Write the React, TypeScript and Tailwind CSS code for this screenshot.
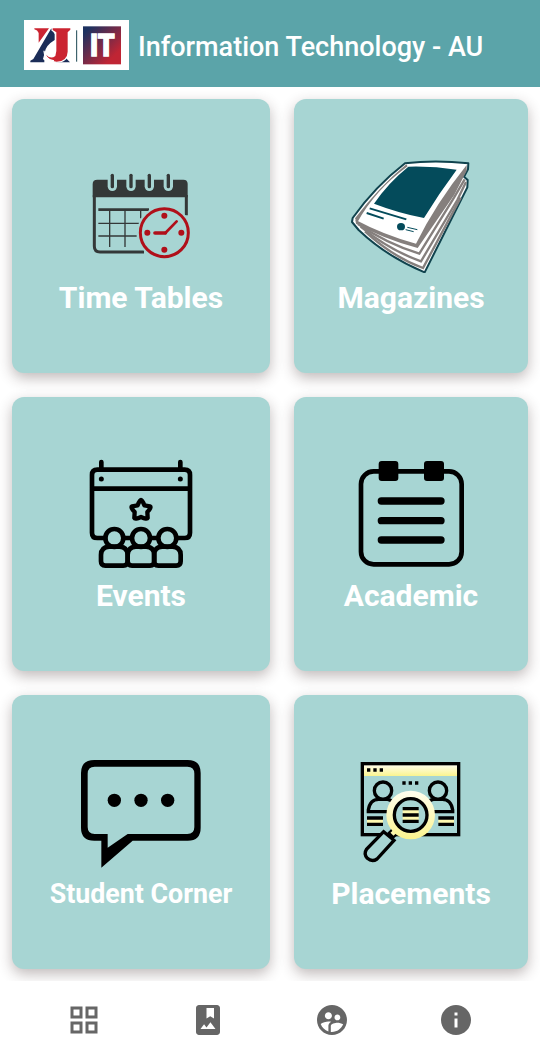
import React from "react";
import { MdInfo, MdOutlineGridView, MdSupervisedUserCircle } from "react-icons/md";

interface Tile {
  label: string;
  labelClass: string;
  icon: React.ReactNode;
}

interface TileIconProps {
  viewBox: string;
  children: React.ReactNode;
}

const TileIcon: React.FC<TileIconProps> = ({ viewBox, children }) => (
  <svg viewBox={viewBox} fill="none" className="h-[124px] w-[140px] shrink-0">
    {children}
  </svg>
);

const TimeTableIcon = () => (
  <TileIcon viewBox="-27 -48 420 372">
    <path d="M43 90V244Q43 261 60 261H192M319 90V151" stroke="#343838" strokeWidth="9" />
    <path d="M38 97V57Q38 44 52 44H310Q323 44 323 57V97Z" fill="#343838" />
    {[97, 153, 208, 265].map((x) => (
      <g key={x} strokeLinecap="round">
        <path d={`M${x} 41V64`} stroke="#a7d5d3" strokeWidth="28" />
        <path d={`M${x} 31V65`} stroke="#343838" strokeWidth="10" />
      </g>
    ))}
    <path d="M55 134H207" stroke="#343838" strokeWidth="8" />
    <path d="M55 175H177M55 213H170M89 134V246M135 134V246M182 134V160" stroke="#343838" strokeWidth="4" />
    <circle cx="253" cy="203" r="82" fill="#a7d5d3" />
    <circle cx="253" cy="203" r="72" stroke="#b0101a" strokeWidth="9" />
    <g fill="#b0101a">
      <circle cx="253" cy="152" r="9" />
      <circle cx="253" cy="254" r="9" />
      <circle cx="202" cy="203" r="9" />
      <circle cx="304" cy="203" r="9" />
    </g>
    <path d="M225 204H256" stroke="#b0101a" strokeWidth="11" strokeLinecap="round" />
    <path d="M256 204L290 169" stroke="#b0101a" strokeWidth="8" strokeLinecap="round" />
  </TileIcon>
);

const MagazineIcon = () => (
  <TileIcon viewBox="3 -3 420 372">
    <path
      d="M195 40Q285 29 385 40L384 58L372 80L383 90L382 112L254 367Q140 320 56 240L36 216L38 204Q105 110 195 40Z"
      fill="#fff"
      stroke="#10434e"
      strokeWidth="6"
      strokeLinejoin="round"
    />
    <path d="M199 43Q120 108 45 205L51 219Q105 120 203 49Z" fill="#857f7d" />
    <path d="M380 45Q288 160 228 281Q130 254 46 209L48 221Q130 266 233 294L343 134L380 62Z" fill="#857f7d" />
    <g stroke="#857f7d" strokeWidth="7">
      <path d="M54 222Q140 281 238 311L342 143L374 88" />
      <path d="M62 230Q145 299 243 334L352 150L378 96" />
      <path d="M75 244Q160 322 249 354L362 143" />
    </g>
    <path d="M205 50Q280 48 350 59Q297 130 252 204Q175 189 102 161Q145 98 205 50Z" fill="#044b5b" />
    <path d="M89 175L199 208M80 189L131 206" stroke="#044b5b" strokeWidth="6" />
    <path d="M202 232L232 239M197 239L221 245" stroke="#044b5b" strokeWidth="3" />
    <ellipse cx="183" cy="230" rx="12" ry="11" fill="#044b5b" />
  </TileIcon>
);

const EventsIcon = () => (
  <TileIcon viewBox="-27 -9 420 372">
    <g stroke="#000" strokeWidth="14" strokeLinecap="round" strokeLinejoin="round">
      <path d="M76 264H52Q36 264 36 248V75Q36 59 52 59H314Q330 59 330 75V248Q330 264 314 264H290M133 264H154M212 264H232M36 116H330M64 36V58M301 36V58" />
      <path
        d="M183 150Q187 150 193 166L210 169Q215 172 202 186L203 204Q201 209 183 201Q165 209 163 204L164 186Q151 172 156 169L173 166Q179 150 183 150Z"
        strokeWidth="13"
      />
      {[103, 183, 262].map((x) => (
        <g key={x} strokeWidth="14">
          <circle cx={x} cy="264" r="27" />
          <path
            d={`M${x - 16} 290Q${x - 40} 292 ${x - 40} 315V334Q${x - 40} 347 ${x - 27} 347H${x + 27}Q${x + 40} 347 ${x + 40} 334V315Q${x + 40} 292 ${x + 16} 290Z`}
          />
        </g>
      ))}
    </g>
    <circle cx="64" cy="87" r="7.500" fill="#000" />
    <circle cx="301" cy="87" r="7.500" fill="#000" />
  </TileIcon>
);

const AcademicIcon = () => (
  <TileIcon viewBox="-12 -9 420 372">
    <rect x="48" y="64" width="302" height="279" rx="38" stroke="#000" strokeWidth="14" />
    <rect x="101" y="33" width="59" height="60" rx="9" fill="#000" />
    <rect x="237" y="33" width="60" height="60" rx="9" fill="#000" />
    <path d="M109 153H288M109 212H288M109 270H288" stroke="#000" strokeWidth="22" strokeLinecap="round" />
  </TileIcon>
);

const StudentCornerIcon = () => (
  <TileIcon viewBox="3 -15 420 372">
    <path
      d="M73 30H353Q392 30 392 69V233Q392 272 353 272H188L94 353V272H73Q33 272 33 233V69Q33 30 73 30ZM74 50Q53 50 53 71V231Q53 252 74 252H113V293L173 252H352Q373 252 373 231V71Q373 50 352 50Z"
      fill="#000"
      fillRule="evenodd"
    />
    <circle cx="133" cy="151" r="20" fill="#000" />
    <circle cx="213" cy="151" r="20" fill="#000" />
    <circle cx="293" cy="151" r="20" fill="#000" />
  </TileIcon>
);

const PlacementsIcon = () => (
  <TileIcon viewBox="-27 -15 420 372">
    <defs>
      <linearGradient id="bar" x1="0" y1="0" x2="0" y2="1">
        <stop offset="0" stopColor="#fffef0" />
        <stop offset="1" stopColor="#fbf48e" />
      </linearGradient>
    </defs>
    <rect x="40" y="43" width="282" height="35" fill="url(#bar)" />
    <rect x="37" y="41" width="289" height="213" stroke="#000" strokeWidth="10" />
    <path d="M51 60H61M70 60H80M89 60H99M157 99H167M176 99H186M195 99H205" stroke="#000" strokeWidth="10" />
    <path d="M51 213H99M265 213H312" stroke="#fdf8b0" strokeWidth="14" />
    <path d="M51 204H99M51 223H99M265 204H312M265 223H312" stroke="#000" strokeWidth="10" />
    <g stroke="#000" strokeWidth="10">
      <circle cx="99" cy="122" r="26" />
      <circle cx="264" cy="122" r="26" />
      <path d="M125 185H55V180Q60 148 86 148H112Q120 148 130 157M238 185H308V180Q303 148 277 148H251Q243 148 233 157" />
    </g>
    <path d="M135 244L108 270" stroke="#000" strokeWidth="26" />
    <path d="M137 242L126 253" stroke="#fdf8b0" strokeWidth="13" />
    <circle cx="182" cy="195" r="73" fill="url(#bar)" />
    <circle cx="182" cy="195" r="49" fill="#a7d5d3" stroke="#000" strokeWidth="10" />
    <path d="M158 195H206" stroke="#fdf8b0" strokeWidth="30" />
    <path d="M158 176H206M158 195H206M158 214H206" stroke="#000" strokeWidth="10" />
    <path d="M101 245L50 297Q40 312 52 325Q66 337 81 327L132 271Z" fill="#a7d5d3" stroke="#000" strokeWidth="10" />
  </TileIcon>
);

const tiles: Tile[] = [
  { label: "Time Tables", labelClass: "text-[30px]", icon: <TimeTableIcon /> },
  { label: "Magazines", labelClass: "text-[30px]", icon: <MagazineIcon /> },
  { label: "Events", labelClass: "text-[30px]", icon: <EventsIcon /> },
  { label: "Academic", labelClass: "text-[30px]", icon: <AcademicIcon /> },
  { label: "Student Corner", labelClass: "text-[26.8px]", icon: <StudentCornerIcon /> },
  { label: "Placements", labelClass: "text-[30px]", icon: <PlacementsIcon /> },
];

const Logo = () => (
  <svg viewBox="0 0 315 150" className="h-[50px] w-[105px] shrink-0 bg-white">
    <defs>
      <linearGradient id="badge" x1="0" y1="0" x2="1" y2="1">
        <stop offset="0.1" stopColor="#1d3160" />
        <stop offset="0.8" stopColor="#c02534" />
      </linearGradient>
    </defs>
    <path d="M31 25H75L44 68V39Q41 30 31 28Z" fill="#cb2431" />
    <path d="M82 25L28 117L19 122V127H61V121L57 117L62 98Q65 76 92 60V43Z" fill="#1b2d58" />
    <path d="M118 104L132 121L138 127H95Z" fill="#1b2d58" />
    <path
      d="M86 25H139V29L131 37V95Q130 123 98 125Q74 122 66 104Q80 119 94 108L97 93V37L86 30Z"
      fill="#cb2431"
      stroke="#fff"
      strokeWidth="7"
      paintOrder="stroke"
    />
    <path d="M60 92Q60 117 90 123" fill="none" stroke="#fff" strokeWidth="4" />
    <path d="M158 31V125" stroke="#1b4652" strokeWidth="3" />
    <rect x="177" y="19" width="114" height="114" fill="url(#badge)" />
    <text
      x="198"
      y="107"
      fill="#fff"
      stroke="#fff"
      strokeWidth="4"
      fontFamily="Roboto, sans-serif"
      fontSize="96"
      fontWeight="900"
      textLength="74"
      lengthAdjust="spacingAndGlyphs"
    >
      IT
    </text>
  </svg>
);

const AlbumIcon = () => (
  <svg viewBox="0 0 24 24" fill="currentColor" className="size-9">
    <path
      fillRule="evenodd"
      d="M18 2H6C4.900 2 4 2.900 4 4V20C4 21.100 4.900 22 6 22H18C19.100 22 20 21.100 20 20V4C20 2.900 19.100 2 18 2ZM11 4H16V11L13.500 9.500L11 11ZM7 18L9.380 14.830L11 17L13.620 13.500L17 18Z"
    />
  </svg>
);

const BottomNav = () => (
  <nav className="relative flex h-[74px] shrink-0 items-center bg-white px-[22px] pt-1 text-[#666]">
    <button className="flex flex-1 justify-center">
      <MdOutlineGridView size={36} />
    </button>
    <button className="flex flex-1 justify-center">
      <AlbumIcon />
    </button>
    <button className="flex flex-1 justify-center">
      <MdSupervisedUserCircle size={36} />
    </button>
    <button className="flex flex-1 justify-center">
      <MdInfo size={36} />
    </button>
  </nav>
);

const App: React.FC = () => {
  return (
    <div className="flex h-screen w-full flex-col overflow-hidden bg-white font-['Roboto',sans-serif]">
      <header className="flex h-[87px] shrink-0 items-center gap-[9px] bg-[#5ba4a9] pt-[3px] pl-6">
        <Logo />
        <h1 className="pt-[5px] text-[27px] font-medium whitespace-nowrap text-white">
          Information Technology - AU
        </h1>
      </header>
      <main className="grid min-h-0 flex-1 grid-cols-[258px_234px] content-start gap-6 overflow-hidden px-3 pt-3">
        {tiles.map((tile) => (
          <div
            key={tile.label}
            className="flex h-[274px] flex-col items-center rounded-xl bg-[#a7d5d3] pt-[50px] shadow-[0_5px_14px_rgba(60,40,40,0.32)]"
          >
            {tile.icon}
            <h2 className={`mt-[7px] leading-9 font-bold whitespace-nowrap text-white ${tile.labelClass}`}>
              {tile.label}
            </h2>
          </div>
        ))}
      </main>
      <BottomNav />
    </div>
  );
};

export default App;
